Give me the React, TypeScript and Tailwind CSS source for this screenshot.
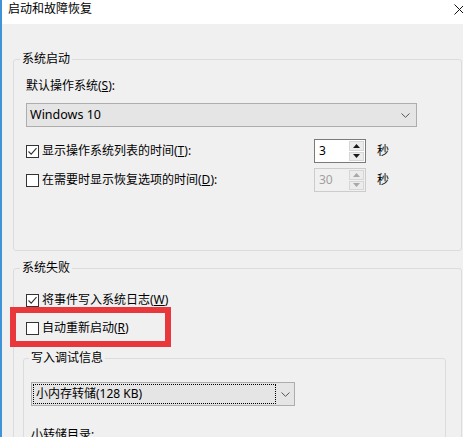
import React from "react";

function Check({ checked }: { checked?: boolean }) {
  return (
    <span className="flex h-[13px] w-[13px] shrink-0 items-center justify-center border border-[#333333] bg-white">
      {checked && (
        <svg width="11" height="11" viewBox="0 0 11 11">
          <path d="M1.5 5.5 L4.2 8.2 L9.5 2.2" fill="none" stroke="#333333" strokeWidth="1.1" />
        </svg>
      )}
    </span>
  );
}

function Chevron({ color = "#555555" }: { color?: string }) {
  return (
    <svg width="9" height="5" viewBox="0 0 9 5">
      <path d="M0.5 0.5 L4.5 4.3 L8.5 0.5" fill="none" stroke={color} strokeWidth="1" />
    </svg>
  );
}

function Spin({ value, disabled }: { value: string; disabled?: boolean }) {
  const arrow = disabled ? "#a8a8a8" : "#1a1a1a";
  return (
    <div
      className={
        disabled
          ? "flex h-[24px] w-[52px] border border-[#cccccc] bg-[#f0f0f0] text-[#a0a0a0]"
          : "flex h-[24px] w-[52px] border border-[#7a7a7a] bg-white text-black"
      }
    >
      <div className="flex-1 pl-[4px] leading-[22px]">{value}</div>
      <div className="my-[1px] mr-[1px] flex w-[15px] flex-col gap-[1px]">
        <div className="flex flex-1 items-center justify-center border border-[#d6d6d6] bg-[#ececec]">
          <svg width="7" height="4" viewBox="0 0 7 4">
            <path d="M0 4 L3.5 0 L7 4 Z" fill={arrow} />
          </svg>
        </div>
        <div className="flex flex-1 items-center justify-center border border-[#d6d6d6] bg-[#ececec]">
          <svg width="7" height="4" viewBox="0 0 7 4">
            <path d="M0 0 L3.5 4 L7 0 Z" fill={arrow} />
          </svg>
        </div>
      </div>
    </div>
  );
}

export default function App() {
  return (
    <div className="relative h-[437px] w-[463px] overflow-hidden border-l-2 border-[#4193d8] bg-[#f0f0f0] font-['Noto_Sans','Noto_Sans_CJK_SC',sans-serif] text-[12px] text-black">
      {/* title bar */}
      <div className="flex h-[24px] items-start justify-between bg-white pl-[6px]">
        <span className="leading-[17px]">启动和故障恢复</span>
        <svg className="mt-[4px] mr-[-2px]" width="11" height="11" viewBox="0 0 11 11">
          <path d="M0.5 0.5 L10.5 10.5 M10.5 0.5 L0.5 10.5" stroke="#111111" strokeWidth="1" />
        </svg>
      </div>

      {/* group 1 */}
      <fieldset className="ml-[11px] mt-[27px] w-[449px] rounded-[3px] border border-[#dcdcdc]">
        <legend className="ml-[6px] px-[2px] leading-[16px]">系统启动</legend>
        <div className="px-[12px] pb-[58px]">
          <div className="mt-[11px] leading-[16px]">
            默认操作系统(<span className="underline">S</span>):
          </div>
          <div className="mt-[9px] flex h-[24px] w-[391px] items-center justify-between border border-[#adadad] bg-[#e5e5e5] pl-[3px] pr-[6px]">
            <span className="text-[12.5px] leading-[22px]">Windows 10</span>
            <Chevron />
          </div>
          <div className="mt-[12px] grid h-[24px] grid-cols-[288px_52px_auto] items-center">
            <div className="flex items-center gap-[3px]">
              <Check checked />
              <span className="leading-[16px]">
                显示操作系统列表的时间(<span className="underline">T</span>):
              </span>
            </div>
            <Spin value="3" />
            <span className="ml-[11px] leading-[16px]">秒</span>
          </div>
          <div className="mt-[5px] grid h-[24px] grid-cols-[288px_52px_auto] items-center">
            <div className="flex items-center gap-[3px]">
              <Check />
              <span className="leading-[16px]">
                在需要时显示恢复选项的时间(<span className="underline">D</span>):
              </span>
            </div>
            <Spin value="30" disabled />
            <span className="ml-[11px] leading-[16px]">秒</span>
          </div>
        </div>
      </fieldset>

      {/* group 2 */}
      <fieldset className="ml-[11px] mt-[9px] w-[449px] rounded-[3px] border border-[#dcdcdc]">
        <legend className="ml-[6px] px-[2px] leading-[16px]">系统失败</legend>
        <div className="pl-[9px]">
          <div className="mt-[14px] flex h-[20px] items-center gap-[3px] pl-[3px]">
            <Check checked />
            <span className="leading-[16px]">
              将事件写入系统日志(<span className="underline">W</span>)
            </span>
          </div>
          <div className="mt-[8px] flex h-[20px] items-center gap-[3px] pl-[3px]">
            <Check />
            <span className="leading-[16px]">
              自动重新启动(<span className="underline">R</span>)
            </span>
          </div>
          <fieldset className="mt-[12px] w-[423px] rounded-[3px] border border-[#dcdcdc]">
            <legend className="ml-[5px] px-[2px] leading-[16px]">写入调试信息</legend>
            <div className="pl-[7px] pb-[40px]">
              <div className="mt-[16px] flex h-[24px] w-[264px] items-center border border-[#adadad] bg-[#e5e5e5]">
                <div className="ml-[1px] flex h-[20px] w-[243px] items-center border border-dotted border-black pl-[2px]">
                  <span className="leading-[16px]">小内存转储(128 KB)</span>
                </div>
                <div className="flex flex-1 items-center justify-center">
                  <Chevron />
                </div>
              </div>
              <div className="mt-[21px] leading-[16px]">小转储目录:</div>
            </div>
          </fieldset>
        </div>
      </fieldset>

      {/* red annotation box */}
      <div className="absolute left-[8px] top-[307px] h-[40px] w-[161px] border-[6px] border-[#e8383c]" />
    </div>
  );
}
